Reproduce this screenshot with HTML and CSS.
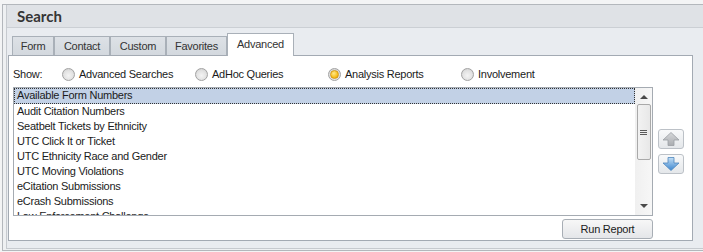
FILE: index.html
```html
<!DOCTYPE html>
<html lang="en">
<head>
    <meta charset="UTF-8">
    <title>Search</title>
    <link rel="stylesheet" href="styles.css">
</head>
<body>
    <div class="window">
        <div class="inner">
            <div class="header">Search</div>

            <div class="content">
                <div class="tabs">
                    <div class="tab tab-form">Form</div>
                    <div class="tab tab-contact">Contact</div>
                    <div class="tab tab-custom">Custom</div>
                    <div class="tab tab-favorites">Favorites</div>
                    <div class="tab tab-advanced active">Advanced</div>
                </div>

                <div class="panel">
                    <div class="show-row">
                        <div class="show-label">Show:</div>
                        <label class="option"><span class="radio"></span>Advanced Searches</label>
                        <label class="option"><span class="radio"></span>AdHoc Queries</label>
                        <label class="option"><span class="radio checked"></span>Analysis Reports</label>
                        <label class="option"><span class="radio"></span>Involvement</label>
                    </div>

                    <div class="list-row">
                        <div class="listbox">
                            <ul class="items">
                                <li class="selected">Available Form Numbers</li>
                                <li>Audit Citation Numbers</li>
                                <li>Seatbelt Tickets by Ethnicity</li>
                                <li>UTC Click It or Ticket</li>
                                <li>UTC Ethnicity Race and Gender</li>
                                <li>UTC Moving Violations</li>
                                <li>eCitation Submissions</li>
                                <li>eCrash Submissions</li>
                                <li>Law Enforcement Challenge</li>
                            </ul>
                            <div class="scrollbar">
                                <div class="scroll-arrow up"></div>
                                <div class="thumb"><span></span><span></span><span></span></div>
                                <div class="scroll-arrow down"></div>
                            </div>
                        </div>

                        <div class="move-buttons">
                            <button class="move-btn">
                                <svg width="18" height="14" viewBox="0 0 18 14">
                                    <defs>
                                        <linearGradient id="grayArrow" x1="0" y1="0" x2="0" y2="1">
                                            <stop offset="0" stop-color="#d6d8da"/>
                                            <stop offset="1" stop-color="#a9acb0"/>
                                        </linearGradient>
                                    </defs>
                                    <path d="M9 0.5 L17 8 H12 V13.5 H6 V8 H1 Z" fill="url(#grayArrow)" stroke="#9a9ea3" stroke-width="0.8"/>
                                </svg>
                            </button>
                            <button class="move-btn">
                                <svg width="18" height="14" viewBox="0 0 18 14">
                                    <defs>
                                        <linearGradient id="blueArrow" x1="0" y1="0" x2="0" y2="1">
                                            <stop offset="0" stop-color="#c4dff5"/>
                                            <stop offset="1" stop-color="#3d87d0"/>
                                        </linearGradient>
                                    </defs>
                                    <path d="M6 0.5 H12 V6 H17 L9 13.5 L1 6 H6 Z" fill="url(#blueArrow)" stroke="#4f86bd" stroke-width="0.8"/>
                                </svg>
                            </button>
                        </div>
                    </div>

                    <div class="actions">
                        <button class="run-btn">Run Report</button>
                    </div>
                </div>
            </div>
        </div>
    </div>
</body>
</html>
```

FILE: styles.css
```css
* {
    margin: 0;
    padding: 0;
    box-sizing: border-box;
}

body {
    width: 703px;
    height: 252px;
    overflow: hidden;
    background: #f3f4f5;
    font-family: 'Liberation Sans', Arial, sans-serif;
    font-size: 11px;
    letter-spacing: -0.25px;
    color: #1b1b1b;
}

.window {
    margin: 4px 0 0 2px;
    border-top: 1px solid #b3b7bc;
    border-left: 1px solid #b3b7bc;
    border-bottom: 1px solid #b3b7bc;
    background: #eef0f2;
    padding: 0 0 1px 3px;
}

.inner {
    border-left: 1px solid #c6cacf;
    border-bottom: 1px solid #c6cacf;
    background: #e9ecf0;
}

.header {
    height: 23px;
    padding-left: 10px;
    background: #dfe2e6;
    border-bottom: 1px solid #cbcfd4;
    font-family: Lato, 'Liberation Sans', sans-serif;
    font-size: 15px;
    font-weight: bold;
    letter-spacing: 0;
    line-height: 22px;
    color: #353535;
}

.content {
    padding: 5px 10px 7px 1px;
}

.tabs {
    display: flex;
    align-items: flex-end;
    height: 22px;
    padding-left: 4px;
}

.tab {
    height: 19px;
    border: 1px solid #a9b0b8;
    border-bottom: none;
    background: linear-gradient(#dde1e6, #d3d8de);
    line-height: 18px;
    text-align: center;
    color: #333;
}

.tab-form { width: 42px; }
.tab-contact { width: 56px; }
.tab-custom { width: 56px; }
.tab-favorites { width: 61px; }
.tab-advanced { width: 67px; }

.tab.active {
    position: relative;
    height: 23px;
    margin-bottom: -1px;
    background: #fff;
    line-height: 20px;
}

.panel {
    height: 186px;
    border: 1px solid #a3aab3;
    background: #fff;
    padding: 10px 4px 0 4px;
}

.show-row {
    display: flex;
    align-items: center;
    height: 16px;
}

.show-label {
    width: 49px;
}

.option {
    display: flex;
    align-items: center;
    gap: 4px;
    width: 133px;
}

.radio {
    width: 13px;
    height: 13px;
    border-radius: 50%;
    border: 1px solid #a2a2a2;
    background: radial-gradient(circle at 50% 60%, #f4f4f4 0, #e2e2e2 55%, #c9c9c9 100%);
    display: flex;
    align-items: center;
    justify-content: center;
}

.radio.checked::after {
    content: '';
    width: 7px;
    height: 7px;
    border-radius: 50%;
    background: radial-gradient(circle at 40% 35%, #ffe98a 0, #f8bf1d 60%, #e19a00 100%);
    border: 1px solid #d49a19;
}

.list-row {
    display: flex;
    margin-top: 5px;
}

.listbox {
    display: flex;
    width: 640px;
    height: 129px;
    border: 1px solid #a5abb2;
    overflow: hidden;
}

.items {
    flex: 1;
    list-style: none;
}

.items li {
    height: 15px;
    line-height: 15px;
    padding-left: 3px;
    white-space: nowrap;
}

.items li.selected {
    background: #c2d1e6;
    outline: 1px dotted #333;
    outline-offset: -1px;
    height: 16px;
}

.scrollbar {
    width: 17px;
    background: linear-gradient(90deg, #f0f0f0, #f7f7f7);
    display: flex;
    flex-direction: column;
    align-items: center;
}

.scroll-arrow {
    width: 0;
    height: 0;
    border-left: 4px solid transparent;
    border-right: 4px solid transparent;
}

.scroll-arrow.up {
    margin-top: 7px;
    border-bottom: 4px solid #4a4a4a;
}

.scroll-arrow.down {
    margin-top: auto;
    margin-bottom: 7px;
    border-top: 4px solid #4a4a4a;
}

.thumb {
    width: 14px;
    height: 56px;
    margin-top: 5px;
    border: 1px solid #a9a9a9;
    border-radius: 2px;
    background: linear-gradient(90deg, #f2f2f2, #e8e8e8);
    display: flex;
    flex-direction: column;
    align-items: center;
    justify-content: center;
    gap: 1px;
}

.thumb span {
    width: 7px;
    height: 1px;
    background: #5a5a5a;
}

.move-buttons {
    display: flex;
    flex-direction: column;
    gap: 5px;
    margin: 42px 0 0 5px;
}

.move-btn {
    width: 26px;
    height: 20px;
    border: 1px solid #bcc1c7;
    border-radius: 3px;
    background: linear-gradient(#f8f9fa, #e4e7ea);
    display: flex;
    align-items: center;
    justify-content: center;
}

.actions {
    display: flex;
    justify-content: flex-end;
    width: 640px;
    margin-top: 3px;
}

.run-btn {
    width: 91px;
    height: 20px;
    border: 1px solid #a8aeb5;
    border-radius: 3px;
    background: linear-gradient(#f7f7f7, #e4e6e9);
    font-family: 'Liberation Sans', Arial, sans-serif;
    font-size: 11px;
    letter-spacing: -0.25px;
    color: #1b1b1b;
}
```
